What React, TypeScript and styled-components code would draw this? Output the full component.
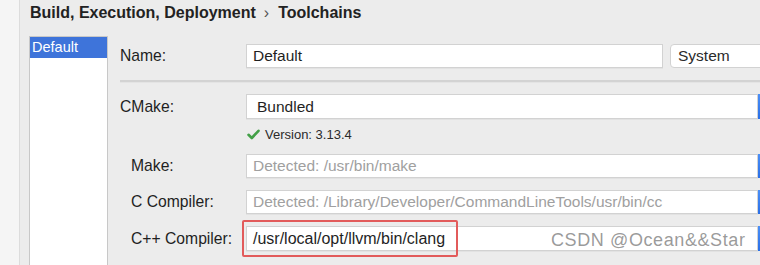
import React from "react";
import styled, { createGlobalStyle } from "styled-components";

const GlobalStyle = createGlobalStyle`
  html, body {
    margin: 0;
    padding: 0;
    background: #ececec;
  }
  body {
    font-family: "Liberation Sans", Arial, sans-serif;
    color: #1f1f1f;
  }
`;

const Page = styled.div`
  position: relative;
  display: flex;
  width: 760px;
  height: 265px;
  overflow: hidden;
  background: #ececec;
`;

const Strip = styled.div`
  width: 19px;
  flex: 0 0 19px;
  background: #f5f5f5;
  border-right: 1px solid #dcdcdc;
`;

const Main = styled.div`
  display: flex;
  flex-direction: column;
  flex: 1;
  min-width: 0;
`;

const Title = styled.div`
  height: 26px;
  line-height: 26px;
  margin-bottom: 10px;
  padding-left: 10px;
  font-size: 16px;
  font-weight: bold;
  color: #222;
  white-space: nowrap;
`;

const Chevron = styled.span`
  display: inline-block;
  margin: 0 9px 0 8px;
  font-weight: normal;
  color: #555;
`;

const Body = styled.div`
  display: flex;
  flex: 1;
`;

const ListBox = styled.div`
  width: 77px;
  flex: 0 0 77px;
  margin-left: 9px;
  background: #fff;
  border: 1px solid #c8c8c8;
  border-bottom: none;
`;

const ListItem = styled.div<{ $selected?: boolean }>`
  height: 21px;
  line-height: 21px;
  padding-left: 2px;
  font-size: 14.5px;
  background: ${(p) => (p.$selected ? "#3e74da" : "transparent")};
  color: ${(p) => (p.$selected ? "#fff" : "#222")};
`;

const Form = styled.div`
  display: flex;
  flex-direction: column;
  padding: 8px 0 0 12px;
`;

const Row = styled.div<{ $indent?: boolean; $gap?: number }>`
  position: relative;
  display: flex;
  align-items: center;
  margin-top: ${(p) => p.$gap ?? 0}px;
  padding-left: ${(p) => (p.$indent ? 11 : 0)}px;
`;

const Label = styled.div<{ $indent?: boolean }>`
  width: ${(p) => (p.$indent ? 115 : 126)}px;
  flex: 0 0 ${(p) => (p.$indent ? 115 : 126)}px;
  font-size: 15.7px;
  color: #1f1f1f;
`;

const Field = styled.div<{ $w: number; $h?: number; $muted?: boolean; $pad?: number; $size?: number }>`
  box-sizing: border-box;
  width: ${(p) => p.$w}px;
  flex: 0 0 ${(p) => p.$w}px;
  height: ${(p) => p.$h ?? 24}px;
  line-height: ${(p) => (p.$h ?? 24) - 2}px;
  padding-left: ${(p) => p.$pad ?? 6}px;
  background: #fff;
  border: 1px solid #d2d2d2;
  box-shadow: 0 1px 0 rgba(0, 0, 0, 0.04);
  font-size: ${(p) => p.$size ?? 15.5}px;
  color: ${(p) => (p.$muted ? "#a0a0a0" : "#1f1f1f")};
  white-space: nowrap;
  overflow: hidden;
`;

const Dropdown = styled.div`
  box-sizing: border-box;
  width: 110px;
  flex: 0 0 110px;
  height: 24px;
  line-height: 22px;
  margin-left: 7px;
  padding-left: 7px;
  background: #fff;
  border: 1px solid #d2d2d2;
  border-radius: 4px;
  font-size: 15.5px;
  color: #2a2a2a;
`;

const ArrowButton = styled.div<{ $h?: number }>`
  width: 20px;
  flex: 0 0 20px;
  height: ${(p) => p.$h ?? 24}px;
  background: linear-gradient(#4b8ff6, #2a6fe6);
  border-radius: 0 4px 4px 0;
`;

const Separator = styled.div`
  height: 2px;
  margin: 12px 0 11px 0;
  background: #d3d3d3;
  border-bottom: 1px solid #e4e4e4;
  width: 660px;
`;

const Version = styled.div`
  display: flex;
  align-items: center;
  gap: 5px;
  height: 16px;
  margin: 7px 0 0 127px;
  font-size: 13px;
  color: #2a2a2a;
`;

const Highlight = styled.div`
  position: absolute;
  left: 122px;
  top: -6px;
  width: 212px;
  height: 33px;
  border: 2px solid #e25b5b;
  border-radius: 2px;
  pointer-events: none;
`;

const Watermark = styled.div`
  position: absolute;
  left: 551px;
  top: 230px;
  font-size: 18px;
  color: rgba(110, 110, 110, 0.7);
  letter-spacing: 0.6px;
  white-space: nowrap;
`;

const Check = () => (
  <svg width="13" height="11" viewBox="0 0 13 11">
    <path d="M1.5 5.8 L4.8 9 L11.5 1.8" fill="none" stroke="#43a047" strokeWidth="2.6" strokeLinecap="round" strokeLinejoin="round" />
  </svg>
);

const App = () => {
  return (
    <Page>
      <GlobalStyle />
      <Strip />
      <Main>
        <Title>
          Build, Execution, Deployment<Chevron>›</Chevron>Toolchains
        </Title>
        <Body>
          <ListBox>
            <ListItem $selected>Default</ListItem>
          </ListBox>
          <Form>
            <Row>
              <Label>Name:</Label>
              <Field $w={417}>Default</Field>
              <Dropdown>System</Dropdown>
            </Row>
            <Separator />
            <Row>
              <Label>CMake:</Label>
              <Field $w={512} $h={25} $pad={10}>Bundled</Field>
              <ArrowButton $h={25} />
            </Row>
            <Version>
              <Check />
              Version: 3.13.4
            </Version>
            <Row $indent $gap={12}>
              <Label $indent>Make:</Label>
              <Field $w={512} $muted>Detected: /usr/bin/make</Field>
              <ArrowButton />
            </Row>
            <Row $indent $gap={12}>
              <Label $indent>C Compiler:</Label>
              <Field $w={512} $muted>Detected: /Library/Developer/CommandLineTools/usr/bin/cc</Field>
              <ArrowButton />
            </Row>
            <Row $indent $gap={12}>
              <Label $indent>C++ Compiler:</Label>
              <Field $w={512} $h={25} $size={16}>/usr/local/opt/llvm/bin/clang</Field>
              <ArrowButton $h={25} />
              <Highlight />
            </Row>
          </Form>
        </Body>
      </Main>
      <Watermark>CSDN @Ocean&amp;&amp;Star</Watermark>
    </Page>
  );
};

export default App;
